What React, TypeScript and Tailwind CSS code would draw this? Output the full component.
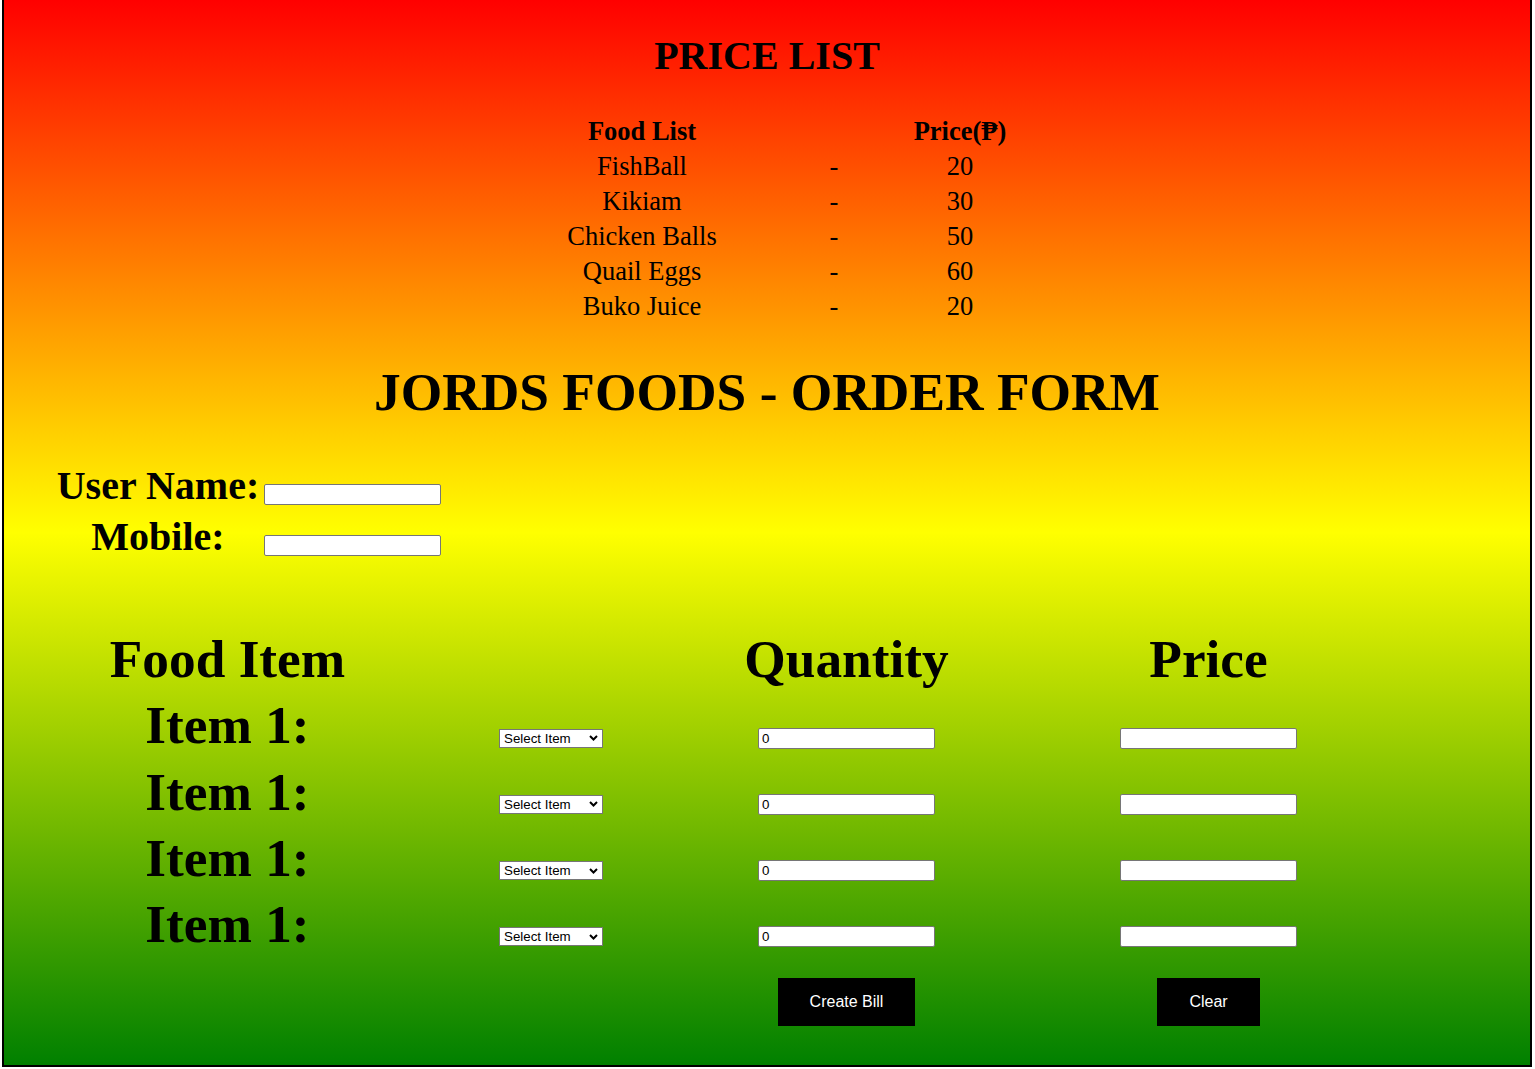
const priceList = [
  { name: "FishBall", price: "20" },
  { name: "Kikiam", price: "30" },
  { name: "Chicken Balls", price: "50" },
  { name: "Quail Eggs", price: "60" },
  { name: "Buko Juice", price: "20" },
]

const textInput =
  "h-[21px] w-[177px] rounded-[2px] border border-[#767676] bg-white pl-[3px] text-[13.33px] text-black font-['Liberation_Sans',Arial,sans-serif] outline-none"

function SelectItem() {
  return (
    <div className="relative mb-[5px] h-[19px] w-[104px] overflow-hidden">
      <select className="block h-[19px] w-[104px] appearance-none rounded-none border border-[#767676] bg-white py-0 pl-[4px] text-[13.33px] leading-[17px] text-black font-['Liberation_Sans',Arial,sans-serif] outline-none">
        <option>Select Item</option>
        <option>FishBall</option>
        <option>Kikiam</option>
        <option>Chicken Balls</option>
        <option>Quail Eggs</option>
        <option>Buko Juice</option>
      </select>
      {/* chevron */}
      <svg
        className="pointer-events-none absolute right-[5px] top-1/2 -translate-y-1/2"
        width="9"
        height="7"
        viewBox="0 0 9 7"
      >
        <path d="M1 1.5 L4.5 5 L8 1.5" fill="none" stroke="black" strokeWidth="2" />
      </svg>
    </div>
  )
}

export default function App() {
  return (
    <div className="min-h-screen bg-white pl-[2px] pr-[3px]">
      <div className="h-[1067px] w-[1530px] border-x-2 border-b-2 border-black bg-[linear-gradient(#ff0000,#ffff00,#008000)] pt-[36px] text-black font-['Liberation_Serif','DejaVu_Serif',serif]">
        {/* PRICE LIST */}
        <h1 className="text-center text-[40px] font-bold leading-none">PRICE LIST</h1>

        <div className="ml-[538px] mt-[38px] grid grid-cols-[200px_184px_68px] text-[26.5px] leading-[35px]">
          <div className="flex justify-center whitespace-nowrap font-bold">Food List</div>
          <div></div>
          <div className="flex justify-center whitespace-nowrap font-bold">Price(₱)</div>
          {priceList.map((item) => (
            <>
              <div key={item.name} className="flex justify-center whitespace-nowrap">
                {item.name}
              </div>
              <div className="flex justify-center">-</div>
              <div className="flex justify-center">{item.price}</div>
            </>
          ))}
        </div>

        {/* ORDER FORM */}
        <h1 className="mt-[42px] text-center text-[53.4px] font-bold leading-none">
          JORDS FOODS - ORDER FORM
        </h1>

        <div className="mt-[46.5px] flex flex-col gap-[11px] pl-[52px]">
          <div className="flex items-end">
            <label className="w-[204px] text-center text-[40px] font-bold leading-none whitespace-nowrap">
              User Name:
            </label>
            <input type="text" className={`ml-[4px] mb-[1px] ${textInput}`} />
          </div>
          <div className="flex items-end">
            <label className="w-[204px] text-center text-[40px] font-bold leading-none">
              Mobile:
            </label>
            <input type="text" className={`ml-[4px] mb-[1px] ${textInput}`} />
          </div>
        </div>

        {/* ITEMS */}
        <div className="mt-[76px] flex flex-col gap-[13px]">
          <div className="grid grid-cols-[447px_200px_391px_333px] items-end justify-items-center text-[53.3px] font-bold leading-none">
            <div>Food Item</div>
            <div></div>
            <div>Quantity</div>
            <div>Price</div>
          </div>
          {[0, 1, 2, 3].map((i) => (
            <div
              key={i}
              className="grid grid-cols-[447px_200px_391px_333px] items-end justify-items-center"
            >
              <div className="text-[53.3px] font-bold leading-none">Item 1:</div>
              <SelectItem />
              <input type="text" defaultValue="0" className={`mb-[4px] ${textInput}`} />
              <input type="text" className={`mb-[4px] ${textInput}`} />
            </div>
          ))}
        </div>

        <div className="mt-[27px] grid grid-cols-[447px_200px_391px_333px] justify-items-center">
          <div></div>
          <div></div>
          <button className="h-[48px] bg-black px-8 text-[16px] text-white font-['Liberation_Sans',Arial,sans-serif]">
            Create Bill
          </button>
          <button className="h-[48px] bg-black px-8 text-[16px] text-white font-['Liberation_Sans',Arial,sans-serif]">
            Clear
          </button>
        </div>
      </div>
    </div>
  )
}
